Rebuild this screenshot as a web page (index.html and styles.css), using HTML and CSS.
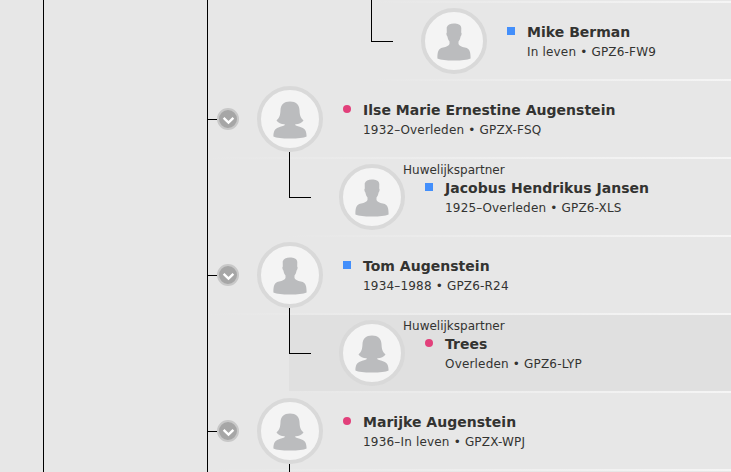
FILE: index.html
```
<!DOCTYPE html>
<html lang="nl">
<head>
  <meta charset="UTF-8">
  <title>Stamboom</title>
  <link rel="stylesheet" href="styles.css">
</head>
<body>
  <!-- Silhouettes -->
  <svg class="sprites" width="0" height="0">
    <symbol id="male" viewBox="0 0 34 38">
      <path d="M17 .5C20.500 .5 24 1.500 24.300 5L24.200 9.500C25 10 24.600 12.500 23.600 13.500C23.200 15.800 22.500 17.300 21.500 18.500V21C22.500 23.500 26 24 29 24.800C32.500 25.900 33.600 28.500 33.600 35.500C30 37 25 37.500 17 37.500S4 37 .4 35.500C.4 28.500 1.500 25.900 5 24.800C8 24 11.500 23.500 12.500 21V18.500C11.500 17.300 10.800 15.800 10.400 13.500C9.400 12.500 9 10 9.800 9.500L9.700 4.500C10.500 2 13 .5 17 .5z"/>
    </symbol>
    <symbol id="female" viewBox="0 0 34 38">
      <path d="M17 .5c6 0 9.300 3.300 9.500 8.500.2 4.500.6 7.500 4 10.400-1.500 2.300-4.600 3.700-8 3.800l-.4.800c1.500 1.200 4 1.500 6.500 2.400 3.600 1.400 5 3.800 5 9.100-3 1.500-8.600 2-16.600 2S3.400 37 .4 35.500c0-5.300 1.400-7.700 5-9.100 2.500-.9 5-1.200 6.500-2.400l-.4-.8c-3.400-.1-6.500-1.500-8-3.800C6.900 16.500 7.300 13.500 7.500 9 7.700 3.800 11 .5 17 .5z"/>
    </symbol>
    <symbol id="chevron" viewBox="0 0 12 8">
      <path d="M1.500 1.500 6 6l4.500-4.500"/>
    </symbol>
  </svg>

  <div class="tree">
    <div class="rail rail-outer"></div>
    <div class="rail rail-inner"></div>

    <div class="people">
      <div class="row grandchild">
        <div class="avatar"><svg><use href="#male"/></svg></div>
        <div class="person">
          <div class="name male">Mike Berman</div>
          <div class="details">In leven • GPZ6-FW9</div>
        </div>
      </div>

      <div class="row child">
        <button class="toggle"><svg><use href="#chevron"/></svg></button>
        <div class="avatar"><svg><use href="#female"/></svg></div>
        <div class="person">
          <div class="name female">Ilse Marie Ernestine Augenstein</div>
          <div class="details">1932–Overleden • GPZX-FSQ</div>
        </div>
      </div>

      <div class="row partner">
        <div class="avatar"><svg><use href="#male"/></svg></div>
        <div class="person">
          <div class="relation">Huwelijkspartner</div>
          <div class="name male">Jacobus Hendrikus Jansen</div>
          <div class="details">1925–Overleden • GPZ6-XLS</div>
        </div>
      </div>

      <div class="row child">
        <button class="toggle"><svg><use href="#chevron"/></svg></button>
        <div class="avatar"><svg><use href="#male"/></svg></div>
        <div class="person">
          <div class="name male">Tom Augenstein</div>
          <div class="details">1934–1988 • GPZ6-R24</div>
        </div>
      </div>

      <div class="row partner selected">
        <div class="avatar"><svg><use href="#female"/></svg></div>
        <div class="person">
          <div class="relation">Huwelijkspartner</div>
          <div class="name female">Trees</div>
          <div class="details">Overleden • GPZ6-LYP</div>
        </div>
      </div>

      <div class="row child">
        <button class="toggle"><svg><use href="#chevron"/></svg></button>
        <div class="avatar"><svg><use href="#female"/></svg></div>
        <div class="person">
          <div class="name female">Marijke Augenstein</div>
          <div class="details">1936–In leven • GPZX-WPJ</div>
        </div>
      </div>

      <div class="row partner"></div>
    </div>
  </div>
</body>
</html>
```
FILE: styles.css
```
:root {
  --bg: #e7e7e7;
  --bg-selected: #e0e0e0;
  --ring: #d9d9d9;
  --line: #000;
  --text: #333331;
  --male: #438ffb;
  --female: #e2407b;
}

* {
  box-sizing: border-box;
}

body {
  margin: 0;
  background: var(--bg);
  color: var(--text);
  font-family: Verdana, "DejaVu Sans", sans-serif;
  font-size: 12px;
}

.sprites {
  position: absolute;
}

.tree {
  display: flex;
  height: 472px;
  overflow: hidden;
}

.rail {
  flex: none;
  border-right: 1px solid var(--line);
}

.rail-outer {
  width: 44px;
}

.rail-inner {
  width: 164px;
}

.people {
  flex: 1;
  min-width: 0;
  padding-top: 1px;
}

.people::before {
  content: "";
  display: block;
  height: 2px;
  margin-left: 163px;
  background: linear-gradient(to right, var(--bg), #f5f5f5);
}

.row {
  position: relative;
  display: flex;
  align-items: center;
  height: 78px;
  border-bottom: 2px solid;
  border-image: linear-gradient(to right, var(--bg), #f5f5f5) 2;
  border-width: 0 0 2px;
  background-clip: padding-box;
}

.partner {
  margin-left: 81px;
  padding-left: 50px;
}

.grandchild {
  margin-left: 163px;
  padding-left: 50px;
}

.selected {
  background-color: var(--bg-selected);
}

/* elbow from the avatar above */
.partner::before,
.grandchild::before {
  content: "";
  position: absolute;
  top: -7px;
  left: 0;
  width: 21px;
  height: 45px;
  border-left: 1px solid var(--line);
  border-bottom: 1px solid var(--line);
}

.child::before {
  content: "";
  width: 9px;
  height: 1px;
  background: var(--line);
}

.toggle {
  display: flex;
  align-items: center;
  justify-content: center;
  width: 22px;
  height: 22px;
  margin-right: 18px;
  padding: 0;
  border: 2px solid #c8c8c8;
  border-radius: 50%;
  background: #a6a6a6;
}

.toggle svg {
  flex: none;
  width: 13px;
  height: 9px;
  margin-top: 2px;
  fill: none;
  stroke: #fff;
  stroke-width: 2.2;
}

.avatar {
  display: flex;
  flex: none;
  align-items: center;
  justify-content: center;
  width: 66px;
  height: 66px;
  border: 4px solid var(--ring);
  border-radius: 50%;
  background: #f4f4f4;
}

.avatar svg {
  width: 34px;
  height: 38px;
  margin-top: 1px;
  fill: #bbbcbe;
}

.person {
  padding: 2px 0 0 20px;
  white-space: nowrap;
}

.relation {
  height: 20px;
  margin: -20px 0 0 -22px;
  line-height: 24px;
}

.name {
  display: flex;
  align-items: center;
  height: 20px;
  font-size: 14px;
  font-weight: bold;
  letter-spacing: 0.02px;
}

.name::before {
  content: "";
  width: 8px;
  height: 8px;
  margin: -2px 12px 0 0;
}

.male::before {
  background: var(--male);
}

.female::before {
  border-radius: 50%;
  background: var(--female);
}

.details {
  height: 20px;
  padding-left: 20px;
  line-height: 20px;
  letter-spacing: 0.18px;
}
```
